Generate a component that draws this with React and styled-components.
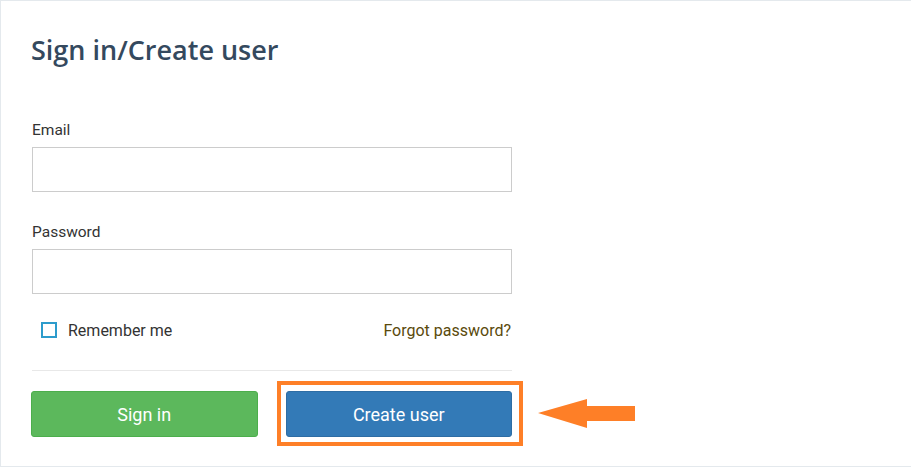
import styled, { createGlobalStyle } from 'styled-components'

const GlobalStyle = createGlobalStyle`
   html, body {
      margin: 0;
      padding: 0;
      background: #ffffff;
   }
   body {
      font-family: Roboto, "Liberation Sans", sans-serif;
      color: #333333;
   }
`

// 카드 전체 (오른쪽 테두리는 화면 밖)
const Card = styled.div`
   box-sizing: border-box;
   height: 467px;
   width: 100%;
   border-top: 1px solid #e4e9ed;
   border-left: 1px solid #e4e9ed;
   border-bottom: 1px solid #e4e9ed;
   padding: 29px 0 0 31px;
`

const Form = styled.form`
   width: 480px;
   display: flex;
   flex-direction: column;
`

const Title = styled.h1`
   margin: 0 0 50px -1px;
   font-family: "Open Sans", "DejaVu Sans", sans-serif;
   font-weight: 600;
   font-size: 27px;
   line-height: 40px;
   color: #34495e;
`

const Field = styled.div`
   display: flex;
   flex-direction: column;
   margin-bottom: ${(props) => props.gap || '0px'};
`

const Label = styled.label`
   font-size: 15.5px;
   line-height: 20px;
   color: #333333;
   margin-bottom: 7px;
`

const Input = styled.input`
   box-sizing: border-box;
   width: 100%;
   height: 45px;
   border: 1px solid #cccccc;
   border-radius: 0;
   outline: none;
   padding: 0 12px;
   font-family: inherit;
   font-size: 15px;
`

const OptionRow = styled.div`
   display: flex;
   align-items: center;
   justify-content: space-between;
   height: 24px;
   margin-top: 24px;
   padding-left: 9px;
`

const Remember = styled.label`
   display: flex;
   align-items: center;
   gap: 11px;
   font-size: 16px;
   color: #333333;
`

const CheckBox = styled.span`
   box-sizing: border-box;
   width: 16px;
   height: 16px;
   border: 2px solid #2d9ccc;
   background: #ffffff;
`

const ForgotLink = styled.a`
   font-size: 16px;
   color: #5a4a0c;
   text-decoration: none;
   margin-right: 1px;
`

const Divider = styled.hr`
   margin: 28px 0 20px;
   border: 0;
   border-top: 1px solid #e8e8e8;
   width: 100%;
`

const ButtonRow = styled.div`
   display: grid;
   grid-template-columns: 1fr 1fr;
   gap: 28px;
   margin-left: -1px;
`

const Button = styled.button`
   box-sizing: border-box;
   width: 100%;
   height: 46px;
   border-radius: 3px;
   border: 1px solid ${(props) => (props.primary ? '#2e6da4' : '#4cae4c')};
   background-color: ${(props) => (props.primary ? '#337ab7' : '#5cb85c')};
   color: #ffffff;
   font-family: Roboto, "Liberation Sans", sans-serif;
   font-size: 18px;
   cursor: pointer;
`

// 주석(하이라이트)용
const Annotated = styled.div`
   position: relative;
`

const Highlight = styled.span`
   position: absolute;
   top: -10px;
   left: -9px;
   right: -11px;
   bottom: -9px;
   border: 4px solid #fe7f27;
   pointer-events: none;
`

const Arrow = styled.svg`
   position: absolute;
   left: calc(100% + 26px);
   top: 8px;
   width: 97px;
   height: 29px;
`

function App() {
   return (
      <>
         <GlobalStyle />
         <Card>
            <Form onSubmit={(e) => e.preventDefault()}>
               <Title>Sign in/Create user</Title>
               <Field gap="30px">
                  <Label>Email</Label>
                  <Input type="email" />
               </Field>
               <Field>
                  <Label>Password</Label>
                  <Input type="password" />
               </Field>
               <OptionRow>
                  <Remember>
                     <CheckBox />
                     Remember me
                  </Remember>
                  <ForgotLink href="#">Forgot password?</ForgotLink>
               </OptionRow>
               <Divider />
               <ButtonRow>
                  <Button type="button">Sign in</Button>
                  <Annotated>
                     <Button type="button" primary>
                        Create user
                     </Button>
                     <Highlight />
                     <Arrow viewBox="0 0 97 29">
                        <polygon
                           points="0,14 49,0 49,7 97,7 97,22 49,22 49,29"
                           fill="#fe7f27"
                        />
                     </Arrow>
                  </Annotated>
               </ButtonRow>
            </Form>
         </Card>
      </>
   )
}

export default App
